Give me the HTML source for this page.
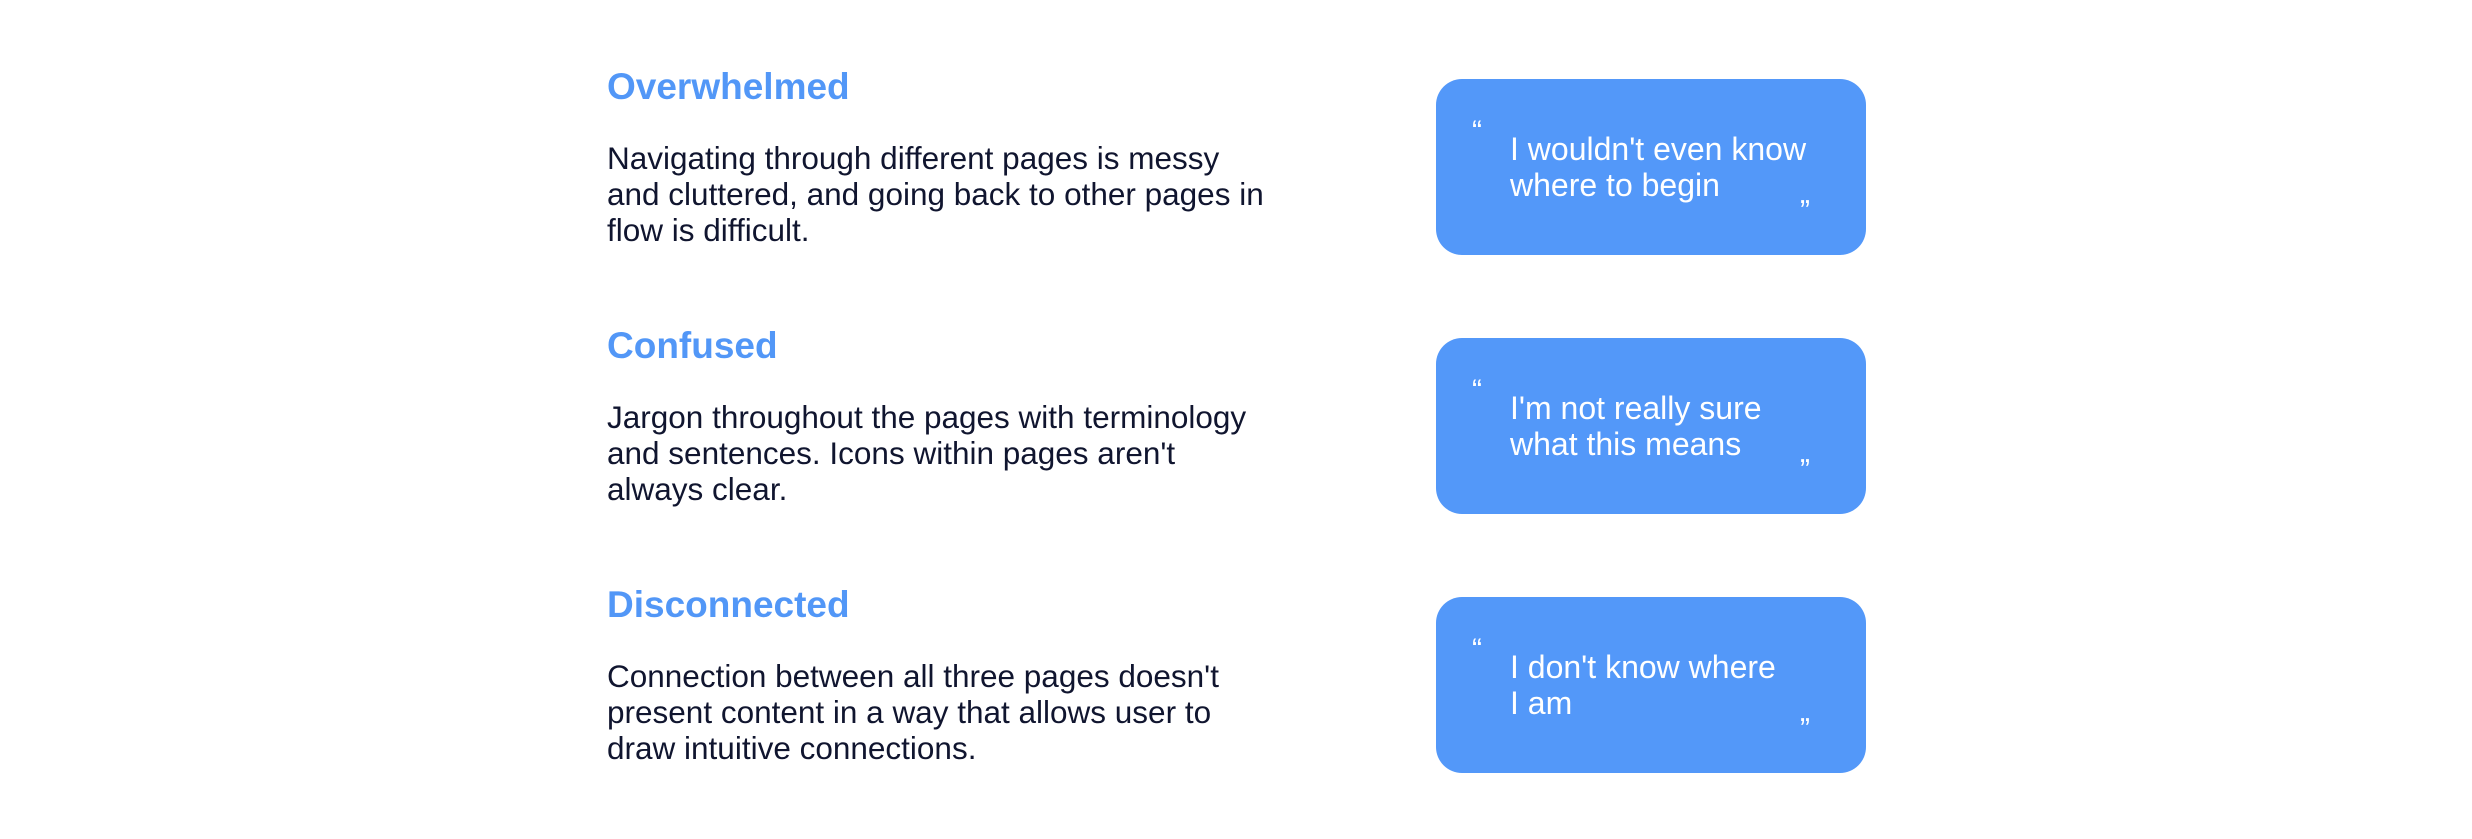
<!DOCTYPE html>
<html><head><meta charset="utf-8"><style>
body{margin:0;width:2472px;height:839px;background:#fff;position:relative;overflow:hidden;font-family:"Liberation Sans",sans-serif}
.h{position:absolute;left:607px;font-size:37px;font-weight:bold;color:#5297f7;line-height:40px}
.p{position:absolute;left:607px;font-size:31.5px;color:#10152f;line-height:36px;width:800px;white-space:nowrap}
.box{position:absolute;left:1436px;width:430px;height:176px;background:#5398f9;border-radius:26px}
.q{position:absolute;left:74px;top:52px;color:#fff;font-size:32px;line-height:36px;white-space:nowrap}
.o{position:absolute;left:36px;top:38px;color:#fff;font-size:30px;line-height:30px}
.c{position:absolute;left:364px;top:100px;color:#fff;font-size:30px;line-height:30px}
</style></head><body>
<div class="h" style="top:67px">Overwhelmed</div>
<div class="p" style="top:140px">Navigating through different pages is messy<br>and cluttered, and going back to other pages in<br>flow is difficult.</div>
<div class="box" style="top:79px"><span class="o">“</span><div class="q">I wouldn't even know<br>where to begin</div><span class="c">„</span></div>

<div class="h" style="top:326px">Confused</div>
<div class="p" style="top:399px">Jargon throughout the pages with terminology<br>and sentences. Icons within pages aren't<br>always clear.</div>
<div class="box" style="top:338px"><span class="o">“</span><div class="q">I'm not really sure<br>what this means</div><span class="c">„</span></div>

<div class="h" style="top:585px">Disconnected</div>
<div class="p" style="top:658px">Connection between all three pages doesn't<br>present content in a way that allows user to<br>draw intuitive connections.</div>
<div class="box" style="top:597px"><span class="o">“</span><div class="q">I don't know where<br>I am</div><span class="c">„</span></div>
</body></html>
